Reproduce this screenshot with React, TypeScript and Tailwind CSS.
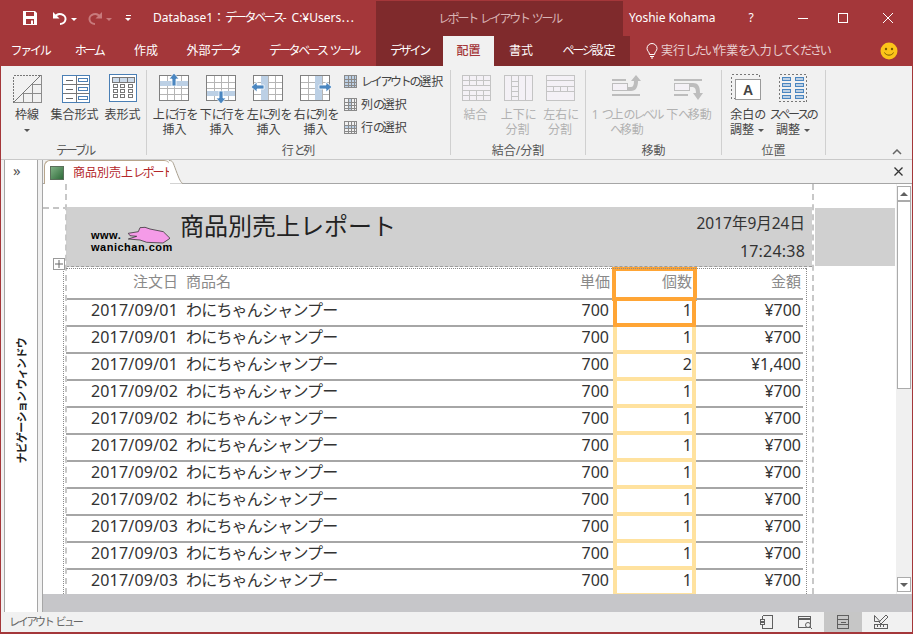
import React from "react";

const FONT = '"Noto Sans","Noto Sans CJK JP",sans-serif';

const rows = [
  ["2017/09/01", "1", "¥700"],
  ["2017/09/01", "1", "¥700"],
  ["2017/09/01", "2", "¥1,400"],
  ["2017/09/02", "1", "¥700"],
  ["2017/09/02", "1", "¥700"],
  ["2017/09/02", "1", "¥700"],
  ["2017/09/02", "1", "¥700"],
  ["2017/09/02", "1", "¥700"],
  ["2017/09/03", "1", "¥700"],
  ["2017/09/03", "1", "¥700"],
  ["2017/09/03", "1", "¥700"],
];

// kana in the reference's UI font is set narrower than its kanji
function k(text: string): React.ReactNode {
  return text.split(/([\u3040-\u30ff]+)/).map((part, i) =>
    i % 2 === 1 ? (
      <span key={i} className="tracking-[-2.3px]">{part}</span>
    ) : (
      <React.Fragment key={i}>{part}</React.Fragment>
    )
  );
}

function Grid({ x, y, cols, rows, w, h, color = "#8c8c8c", fill = "none", outer }: { x: number; y: number; cols: number; rows: number; w: number; h: number; color?: string; fill?: string; outer?: string }) {
  const ls: React.ReactNode[] = [];
  for (let i = 1; i < cols; i++) {
    const p = Math.round(x + (w * i) / cols) + 0.5;
    ls.push(<line key={"c" + i} x1={p} x2={p} y1={y} y2={y + h} stroke={color} />);
  }
  for (let i = 1; i < rows; i++) {
    const p = Math.round(y + (h * i) / rows) + 0.5;
    ls.push(<line key={"r" + i} y1={p} y2={p} x1={x} x2={x + w} stroke={color} />);
  }
  return (
    <g>
      <rect x={x} y={y} width={w} height={h} fill={fill} />
      {ls}
      <rect x={x} y={y} width={w} height={h} fill="none" stroke={outer || color} />
    </g>
  );
}

function Ic({ children, w = 32, h = 32 }: { children: React.ReactNode; w?: number; h?: number }) {
  return (
    <svg width={w} height={h} viewBox={`0 0 ${w} ${h}`} shapeRendering="crispEdges" className="block">
      {children}
    </svg>
  );
}

const BLUE = "#4a86c0";
const PALE = "#bcd0e5";

function BorderIcon() {
  return (
    <Ic>
      <path d="M2.5 30.5V3.5H29" fill="none" stroke="#777" strokeDasharray="2 1" />
      <path d="M2 31L30 3" stroke="#777" shapeRendering="auto" />
      <path d="M30 3V30H3M30 12H21M30 21H12M21 12V30M12 21V30" stroke="#8c8c8c" fill="none" />
    </Ic>
  );
}
function StackedIcon() {
  return (
    <Ic>
      <rect x="3.5" y="3.5" width="27" height="27" fill="#fff" stroke="#4a7fb5" />
      <path d="M17 4V30M4 12H30M4 21H30" stroke="#777" fill="none" />
      <path d="M7 8h7M7 17h7M7 26h7" stroke="#666" />
      <rect x="19.5" y="6.5" width="9" height="3" fill="#fff" stroke="#4a7fb5" />
      <rect x="19.5" y="15.5" width="9" height="3" fill="#fff" stroke="#4a7fb5" />
      <rect x="19.5" y="24.5" width="9" height="3" fill="#fff" stroke="#4a7fb5" />
    </Ic>
  );
}
function TabularIcon() {
  return (
    <Ic>
      <rect x="2.5" y="2.5" width="27" height="27" fill="#fff" stroke="#4a7fb5" />
      <Grid x={5} y={5} cols={3} rows={1} w={22} h={5} color="#777" fill="#cddbea" />
      {[12, 17, 22].map((yy) =>
        [6, 13, 21].map((xx) => <rect key={yy + "-" + xx} x={xx + 0.5} y={yy + 0.5} width="4" height="3" fill="#fff" stroke="#777" />)
      )}
    </Ic>
  );
}
function InsertIcon({ dir }: { dir: "up" | "down" | "left" | "right" }) {
  const band =
    dir === "up" ? <rect x="4" y="9" width="28" height="5" fill={PALE} /> :
    dir === "down" ? <rect x="4" y="19" width="28" height="5" fill={PALE} /> :
    dir === "left" ? <rect x="11" y="3" width="7" height="25" fill={PALE} /> :
    <rect x="18" y="3" width="7" height="25" fill={PALE} />;
  const arrow =
    dir === "up" ? "M18 1l5 6h-3v7h-4V7h-3z" :
    dir === "down" ? "M18 32l5-6h-3v-7h-4v7h-3z" :
    dir === "left" ? "M1 15l6-5v3h7v4H7v3z" :
    "M35 15l-6-5v3h-7v4h7v3z";
  return (
    <Ic w={37} h={32}>
      <Grid x={3.5} y={3.5} cols={4} rows={4} w={29} h={25} color="#b5b5b5" outer="#808080" fill="#fff" />
      {band}
      <rect x="3.5" y="3.5" width="29" height="25" fill="none" stroke="#808080" />
      <path d={arrow} fill={BLUE} stroke="#fff" shapeRendering="auto" strokeWidth="0.8" />
    </Ic>
  );
}
function SelIcon({ band }: { band: "all" | "col" | "row" }) {
  return (
    <Ic w={13} h={13}>
      {band === "all" && <rect x="0" y="0" width="13" height="13" fill={PALE} />}
      {band === "col" && <rect x="4" y="0" width="4" height="13" fill={PALE} />}
      {band === "row" && <rect x="0" y="4" width="13" height="3" fill={PALE} />}
      <Grid x={0.5} y={0.5} cols={4} rows={4} w={12} h={12} color="#8a8a8a" />
    </Ic>
  );
}
function DisabledTable({ kind }: { kind: number }) {
  const c = "#c4c4c4";
  return (
    <Ic w={30} h={28}>
      <rect x="1.500" y="1.500" width="28" height="25" fill="#f4f1f6" stroke={c} />
      {kind === 0 && (
        <path d="M2 6.500H29M2 11.500H29M2 16.500H29M2 21.500H29M8.500 2V11M15.500 2V11M22.500 2V11M8.500 17V26M15.500 17V26M22.500 17V26" stroke={c} />
      )}
      {kind === 1 && <path d="M8.500 2V26M15.500 2V26M22.500 2V26M8.500 7.500H15M8.500 12.500H15M8.500 17.500H15M8.500 22.500H15" stroke={c} />}
      {kind === 2 && <path d="M2 6.500H29M2 12.500H29M2 17.500H29M8.500 12V17M15.500 12V17M22.500 12V17" stroke={c} />}
    </Ic>
  );
}
function MoveIcon({ up }: { up: boolean }) {
  const c = "#bdbdbd";
  return (
    <Ic w={30} h={26}>
      <rect x="0" y="4" width={up ? 14 : 28} height="2" fill={c} />
      <rect x="0.500" y="8.500" width="15" height="7" fill="#f4f1f6" stroke={c} />
      <rect x="0" y="19" width={up ? 28 : 14} height="2" fill={c} />
      {up ? (
        <path d="M16 12h3c2 0 3-2 3-6h-3l5-6 5 6h-3c0 6-2 10-7 10h-3z" fill={c} shapeRendering="auto" />
      ) : (
        <path d="M16 8h3c5 0 7 3 7 10h3l-5 7-5-7h3c0-4-1-6-4-6h-2z" fill={c} shapeRendering="auto" />
      )}
    </Ic>
  );
}
function MarginIcon() {
  return (
    <Ic w={32} h={28}>
      <rect x="0.500" y="0.500" width="28" height="24" fill="none" stroke="#777" strokeDasharray="2 2" />
      <rect x="4.500" y="5.500" width="25" height="20" fill="#fff" stroke="#9a9a9a" />
      <text x="17" y="21" textAnchor="middle" fontSize="14" fontWeight="700" fill="#444" fontFamily="Liberation Sans">A</text>
    </Ic>
  );
}
function SpaceIcon() {
  return (
    <Ic w={29} h={29}>
      <rect x="0.500" y="0.500" width="27" height="27" fill="none" stroke="#777" strokeDasharray="2 2" />
      {[3, 9, 15, 21].map((y) => (
        <g key={y}>
          <rect x="3.500" y={y + 0.5} width="8" height="3" fill={PALE} stroke={BLUE} />
          <rect x="16.500" y={y + 0.5} width="8" height="3" fill={PALE} stroke={BLUE} />
        </g>
      ))}
    </Ic>
  );
}

function Caret({ color = "#555" }: { color?: string }) {
  return <span className="inline-block w-0 h-0 border-x-[3px] border-x-transparent border-t-[3px] align-middle" style={{ borderTopColor: color }} />;
}

function Btn({ w, icon, l1, l2, off, caret }: { w: number; icon: React.ReactNode; l1: string; l2?: string; off?: boolean; caret?: boolean }) {
  return (
    <div className={`flex flex-col items-center shrink-0 text-xs leading-[15px] whitespace-nowrap ${off ? "text-[#b1b1b1]" : "text-[#444]"}`} style={{ width: w }}>
      <div className="h-[36px] flex items-center justify-center">{icon}</div>
      <div className="h-[15px] mt-px">{k(l1)}</div>
      <div className="h-[15px]">
        {l2 ? k(l2) : null}
        {l2 && caret ? <span className="ml-[4px]"><Caret /></span> : null}
        {!l2 && caret ? <Caret /> : null}
      </div>
    </div>
  );
}

function Group({ w, label, children, last }: { w: number; label: string; children: React.ReactNode; last?: boolean }) {
  return (
    <div className={`shrink-0 flex flex-col h-[85px] ${last ? "" : "border-r border-[#d0d0d0]"}`} style={{ width: w }}>
      <div className="flex justify-center flex-1">{children}</div>
      <div className="text-center text-xs leading-[14px] text-[#555] -mb-[3px]">{k(label)}</div>
    </div>
  );
}

function Tab({ children, w, dark, active }: { children: string; w: number; dark?: boolean; active?: boolean }) {
  return (
    <div
      className={`h-[30px] flex items-center justify-center text-xs whitespace-nowrap shrink-0 ${active ? "bg-[#f1f1f1] text-[#a4373a] font-medium" : dark ? "bg-[#7f2a2c] text-white" : "text-white"}`}
      style={{ width: w }}
    >
      <span>{k(children)}</span>
    </div>
  );
}

function Row({ date, qty, amt, first }: { date: string; qty: string; amt: string; first: boolean }) {
  return (
    <div className="flex h-[27px] text-[16px] leading-[21px] text-[#333]">
      <div className="flex w-[547px] border-b-2 border-[#a6a6a6]">
        <div className="w-[112px] text-right tracking-[0.2px]">{date}</div>
        <div className="ml-[8px] flex-1 tracking-[-0.8px]">わにちゃんシャンプー</div>
        <div className="w-[60px] text-right mr-[4px]">700</div>
      </div>
      <div className={`w-[83px] box-border text-right border-x-4 border-b-4 ${first ? "border-[#ffa535]" : "border-[#ffe29f]"}`}>{qty}</div>
      <div className="w-[107px] border-b-2 border-[#a6a6a6] text-right pr-[2px]">{amt}</div>
    </div>
  );
}

function StatusIcon({ i }: { i: number }) {
  const c = "#5f5f5f";
  return (
    <Ic w={16} h={16}>
      {i === 0 && <path d="M3.500 1.500H13.500V14.500H3.500M3.500 1.500V5M3.500 11V14.500M1 5.500H5V7.500H1zM1 8.500H5V10.500H1z" fill="none" stroke={c} />}
      {i === 1 && (
        <g fill="none" stroke={c}>
          <rect x="1.500" y="2.500" width="12" height="11" />
          <path d="M2 4.500H13" strokeWidth="2" />
          <circle cx="11" cy="11" r="2.500" fill="#f1f1f1" shapeRendering="auto" />
          <path d="M13 13l2 2" shapeRendering="auto" />
        </g>
      )}
      {i === 2 && <path d="M2.500 1.500H13.500V14.500H2.500zM2.500 5.500H13.500M2.500 10.500H13.500M6 8H11" fill="none" stroke={c} />}
      {i === 3 && (
        <g fill="none" stroke={c}>
          <path d="M1.500 1.500V7.500L7 7.500z" shapeRendering="auto" />
          <path d="M6 8L13 1l2 2-7 7z" shapeRendering="auto" />
          <path d="M1.500 10.500H14.500V14.500H1.500zM4.500 11V13M7.500 11V13M10.500 11V13" />
        </g>
      )}
    </Ic>
  );
}

export default function App() {
  return (
    <div className="w-[913px] h-[634px] flex flex-col overflow-hidden bg-[#a4373a]" style={{ fontFamily: FONT }}>
      {/* title bar */}
      <div className="h-[36px] flex items-center shrink-0 text-white">
        <div className="w-[376px] flex items-center h-full shrink-0">
          <svg width="16" height="16" viewBox="0 0 16 16" className="ml-[22px]">
            <path d="M1 1h12l2 2v12H1z" fill="#fff" />
            <rect x="4" y="2" width="8" height="4" fill="#a4373a" />
            <rect x="4" y="9" width="8" height="5" fill="#a4373a" />
            <rect x="9" y="10.500" width="2" height="3.500" fill="#fff" />
          </svg>
          <svg width="16" height="16" viewBox="0 0 16 16" className="ml-[14px]" fill="none">
            <path d="M3 7a5.500 5 0 1 1 5 7" stroke="#fff" strokeWidth="2" />
            <path d="M1 2v6.500h6.500z" fill="#fff" />
          </svg>
          <span className="ml-[3px]"><Caret color="#fff" /></span>
          <svg width="16" height="16" viewBox="0 0 16 16" className="ml-[10px]" fill="none">
            <path d="M13 7a5.500 5 0 1 0-5 7" stroke="#c87a7c" strokeWidth="2" />
            <path d="M15 2v6.500H8.500z" fill="#c87a7c" />
          </svg>
          <span className="ml-[3px]"><Caret color="#c87a7c" /></span>
          <span className="ml-[13px] flex flex-col items-center gap-[2px]">
            <span className="block w-[5px] h-px bg-white" />
            <Caret color="#fff" />
          </span>
          <span className="ml-[22px] text-xs whitespace-nowrap">{k("Database1：データベース-")}<span className="ml-[5px]">C:¥Users⋯</span></span>
        </div>
        <div className="w-[247px] h-[35px] mt-px bg-[#7f2a2c] text-[#d9b3b4] text-xs flex items-center justify-center shrink-0">
          <span>{k("レポート レイアウト ツール")}</span>
        </div>
        <div className="ml-[6px] text-xs whitespace-nowrap w-[107px]">Yoshie Kohama</div>
        <div className="w-[30px] text-xs text-center">?</div>
        <svg width="12" height="12" viewBox="0 0 12 12" className="ml-[31px]"><path d="M1 6.500H11" stroke="#fff" /></svg>
        <svg width="12" height="12" viewBox="0 0 12 12" className="ml-[28px]" shapeRendering="crispEdges"><rect x="1.500" y="1.500" width="9" height="9" fill="none" stroke="#fff" /></svg>
        <svg width="12" height="12" viewBox="0 0 12 12" className="ml-[33px]"><path d="M1 1L11 11M11 1L1 11" stroke="#fff" /></svg>
      </div>

      {/* tabs */}
      <div className="h-[30px] flex shrink-0">
        <Tab w={60}>ファイル</Tab>
        <Tab w={58}>ホーム</Tab>
        <Tab w={56}>作成</Tab>
        <Tab w={78}>外部データ</Tab>
        <Tab w={124}>データベース ツール</Tab>
        <Tab w={67} dark>デザイン</Tab>
        <Tab w={51} active>配置</Tab>
        <Tab w={54} dark>書式</Tab>
        <Tab w={82} dark>ページ設定</Tab>
        <div className="flex items-center text-xs text-[#e8cfd0] ml-[15px] whitespace-nowrap">
          <svg width="14" height="16" viewBox="0 0 14 16" fill="none" className="mr-[2px]" stroke="#fff">
            <path d="M4.500 11.500C4.500 9 2 8 2 5.500a5 5 0 0 1 10 0c0 2.500-2.500 3.500-2.500 6z" />
            <path d="M5 13.500h4M6 15h2" />
          </svg>
          <span>{k("実行したい作業を入力してください")}</span>
        </div>
        <div className="ml-auto mr-[15px] self-center">
          <svg width="18" height="18" viewBox="0 0 18 18">
            <circle cx="9" cy="9" r="8.500" fill="#fcc419" />
            <circle cx="6" cy="7" r="1.200" fill="#7a5a00" />
            <circle cx="12" cy="7" r="1.200" fill="#7a5a00" />
            <path d="M4.500 10.500c1.500 3.500 7.500 3.500 9 0" stroke="#7a5a00" fill="none" />
          </svg>
        </div>
      </div>

      {/* ribbon */}
      <div className="mx-px h-[94px] shrink-0 bg-[#f1f1f1] border-b border-[#c9c9c9] flex pt-[4px] pl-[3px] relative">
        <Group w={143} label="テーブル">
          <Btn w={46} icon={<BorderIcon />} l1="枠線" caret />
          <Btn w={49} icon={<StackedIcon />} l1="集合形式" />
          <Btn w={47} icon={<TabularIcon />} l1="表形式" />
        </Group>
        <Group w={304} label="行と列">
          <div className="flex pl-[4px] w-full">
            <Btn w={47} icon={<InsertIcon dir="up" />} l1="上に行を" l2="挿入" />
            <Btn w={47} icon={<InsertIcon dir="down" />} l1="下に行を" l2="挿入" />
            <Btn w={47} icon={<InsertIcon dir="left" />} l1="左に列を" l2="挿入" />
            <Btn w={47} icon={<InsertIcon dir="right" />} l1="右に列を" l2="挿入" />
            <div className="ml-[5px] flex flex-col gap-[8px] pt-[4px] text-xs leading-[15px] text-[#444] whitespace-nowrap">
              <div className="flex items-center gap-[4px]"><SelIcon band="all" /><span>{k("レイアウトの選択")}</span></div>
              <div className="flex items-center gap-[4px]"><SelIcon band="col" /><span>{k("列の選択")}</span></div>
              <div className="flex items-center gap-[4px]"><SelIcon band="row" /><span>{k("行の選択")}</span></div>
            </div>
          </div>
        </Group>
        <Group w={135} label="結合/分割">
          <Btn w={42} off icon={<DisabledTable kind={0} />} l1="結合" />
          <Btn w={42} off icon={<DisabledTable kind={1} />} l1="上下に" l2="分割" />
          <Btn w={43} off icon={<DisabledTable kind={2} />} l1="左右に" l2="分割" />
        </Group>
        <Group w={136} label="移動">
          <div className="flex pl-[5px] w-full">
            <Btn w={72} off icon={<MoveIcon up />} l1="1 つ上のレベル" l2="へ移動" />
            <Btn w={52} off icon={<MoveIcon up={false} />} l1="下へ移動" />
          </div>
        </Group>
        <Group w={104} label="位置">
          <div className="flex pl-[2px] w-full">
            <Btn w={46} icon={<MarginIcon />} l1="余白の" l2="調整" caret />
            <Btn w={46} icon={<SpaceIcon />} l1="スペースの" l2="調整" caret />
          </div>
        </Group>
        <svg width="10" height="6" viewBox="0 0 10 6" className="absolute right-[10px] bottom-[4px]" fill="none">
          <path d="M1 5l4-4 4 4" stroke="#666" strokeWidth="1.500" />
        </svg>
      </div>

      {/* main */}
      <div className="mx-px flex-1 min-h-0 flex bg-[#f1f1f1]">
        <div className="w-[34px] ml-[3px] bg-white border-x border-[#a6a6a6] flex flex-col shrink-0">
          <span className="text-[15px] leading-none mt-[3px] ml-[8px] text-[#555]">»</span>
          <span className="self-center mt-[160px] text-[11px] font-bold text-[#222] leading-none whitespace-nowrap tracking-[-0.7px] [writing-mode:vertical-rl] [text-orientation:sideways] rotate-180">ナビゲーション ウィンドウ</span>
        </div>
        <div className="w-[5px] shrink-0 border-r border-[#a6a6a6]" />
        <div className="flex-1 min-w-0 flex flex-col bg-[#c6c6c9]">
          {/* doc tab strip */}
          <div className="h-[24px] shrink-0 bg-[#f1f1f1] border-b border-[#a6a6a6] flex relative">
            <div className="h-[24px] w-[126px] ml-px bg-white rounded-t-md border-l border-t border-[#b7a58c] flex items-center pl-[5px] text-xs text-[#b3262a] relative z-10 whitespace-nowrap">
              <span className="w-[14px] h-[14px] mr-[9px] border border-[#5b6f5b] bg-[linear-gradient(135deg,#7fb184,#2f6b3a)] inline-block shrink-0" />
              <span>{k("商品別売上レポート")}</span>
            </div>
            <svg width="14" height="24" viewBox="0 0 14 24" className="-ml-px z-20" fill="none">
              <path d="M0 .5c4 0 4 2 7 10s5 13 7 13H0z" fill="#fff" />
              <path d="M0 .5c4 0 4 2 7 10s5 13 7 13" stroke="#a9a08f" />
            </svg>
            <svg width="9" height="9" viewBox="0 0 9 9" className="absolute right-[9px] top-[7px]"><path d="M.5 .5l8 8M8.500 .5l-8 8" stroke="#333" strokeWidth="1.300" /></svg>
          </div>
          <div className="flex-1 min-h-0 flex">
            {/* report canvas */}
            <div className="w-[853px] shrink-0 bg-white relative overflow-hidden">
              <div className="h-[23px] border-b-2 border-dashed border-[#c4c4c4] mr-[84px] box-content -mb-[2px]" />
              <div className="flex items-start">
                <div className="ml-[23px] w-[746px] h-[59px] bg-[#d0d0d0] flex relative shrink-0 border-b border-dashed border-[#9c9c9c] box-content">
                  <div className="w-[108px] relative shrink-0">
                    <div className="absolute left-[25px] top-[22px] text-[11px] font-bold leading-[12px] text-black tracking-[0.5px]" style={{ fontFamily: '"Liberation Sans",sans-serif' }}>
                      www.<br />wanichan.com
                    </div>
                    <svg width="46" height="20" viewBox="0 0 46 20" className="absolute left-[60px] top-[19px]">
                      <path d="M2.300 7.300L12.300 5.700 14 1.700 19 1.300 24 3 37.300 5.700 44 12.300 37 17 20.700 16.300 14 14 2.300 13 10.700 10.300 4 9.700z" fill="#f59be8" stroke="#222" strokeWidth=".7" />
                    </svg>
                  </div>
                  <div className="text-[24px] leading-[32px] text-[#222] mt-[3px] ml-[6px] whitespace-nowrap">商品別売上レポート</div>
                  <div className="ml-auto mr-[7px] text-right text-[#333] text-[15.500px] leading-[20px]">
                    <div className="mt-[6px]">2017年9月24日</div>
                    <div className="mt-[8px] text-[16px] tracking-[0.2px]">17:24:38</div>
                  </div>
                </div>
                <div className="ml-[3px] w-[80px] h-[58px] mt-px bg-[#d0d0d0] shrink-0" />
              </div>
              <div className="ml-[23px] w-[737px] mt-px">
                <div className="flex h-[32px] text-[15px] leading-[21px] text-[#8a8a8a]">
                  <div className="flex w-[547px] border-b-2 border-[#a6a6a6] pt-[3px]">
                    <div className="w-[112px] text-right">注文日</div>
                    <div className="ml-[8px] flex-1">商品名</div>
                    <div className="w-[60px] text-right mr-[3px]">単価</div>
                  </div>
                  <div className="w-[85px] -mx-px box-border text-right pr-px border-4 border-[#ffa535] -mt-px -mb-px leading-[20px]">個数</div>
                  <div className="w-[107px] border-b-2 border-[#a6a6a6] pt-[3px] pr-[2px] text-right">金額</div>
                </div>
                {rows.map((r, i) => (
                  <Row key={i} date={r[0]} qty={r[1]} amt={r[2]} first={i === 0} />
                ))}
              </div>
              {/* layout guides */}
              <div className="absolute left-[22px] top-0 bottom-0 border-l-2 border-dashed border-[#c8c8c8]" />
              <div className="absolute left-[769px] top-0 bottom-0 border-l-2 border-dashed border-[#c8c8c8]" />
              <div className="absolute left-[20px] top-[84px] bottom-0 border-l border-dotted border-[#8a8a8a]" />
              <div className="absolute left-[763px] top-[84px] bottom-0 border-l border-dotted border-[#8a8a8a]" />
              <div className="absolute left-[23px] w-[740px] top-[84px] border-t border-dotted border-[#8a8a8a]" />
              <div className="absolute left-[10px] top-[74px] w-[12px] h-[12px] bg-white border border-[#9a9a9a] flex items-center justify-center">
                <svg width="8" height="8" viewBox="0 0 8 8"><path d="M4 0V8M0 4H8" stroke="#666" /></svg>
              </div>
            </div>
            {/* scrollbar */}
            <div className="w-[16px] shrink-0 bg-[#f0f0f0] flex flex-col border-x border-[#f0f0f0]">
              <div className="h-[2px] bg-white" />
              <div className="h-[15px] bg-white border border-[#ababab] flex items-center justify-center">
                <span className="w-0 h-0 border-x-[4px] border-x-transparent border-b-[4px] border-b-[#606060]" />
              </div>
              <div className="h-[188px] bg-white border border-[#ababab]" />
              <div className="flex-1" />
              <div className="h-[15px] bg-white border border-[#ababab] flex items-center justify-center">
                <span className="w-0 h-0 border-x-[4px] border-x-transparent border-t-[4px] border-t-[#606060]" />
              </div>
              <div className="h-[2px] bg-white" />
            </div>
          </div>
          <div className="h-[18px] shrink-0 bg-[#c6c6c9]" />
        </div>
      </div>

      {/* status */}
      <div className="mx-px mb-[2px] h-[20px] shrink-0 bg-[#f1f1f1] flex items-center text-[11px] text-[#666] pl-[8px]">
        <span>{k("レイアウト ビュー")}</span>
        <div className="ml-auto flex h-full">
          <div className="w-[38px] flex items-center justify-center"><StatusIcon i={0} /></div>
          <div className="w-[38px] flex items-center justify-center"><StatusIcon i={1} /></div>
          <div className="w-[38px] flex items-center justify-center bg-[#c6c6c6]"><StatusIcon i={2} /></div>
          <div className="w-[38px] flex items-center justify-center mr-[12px]"><StatusIcon i={3} /></div>
        </div>
      </div>
    </div>
  );
}
